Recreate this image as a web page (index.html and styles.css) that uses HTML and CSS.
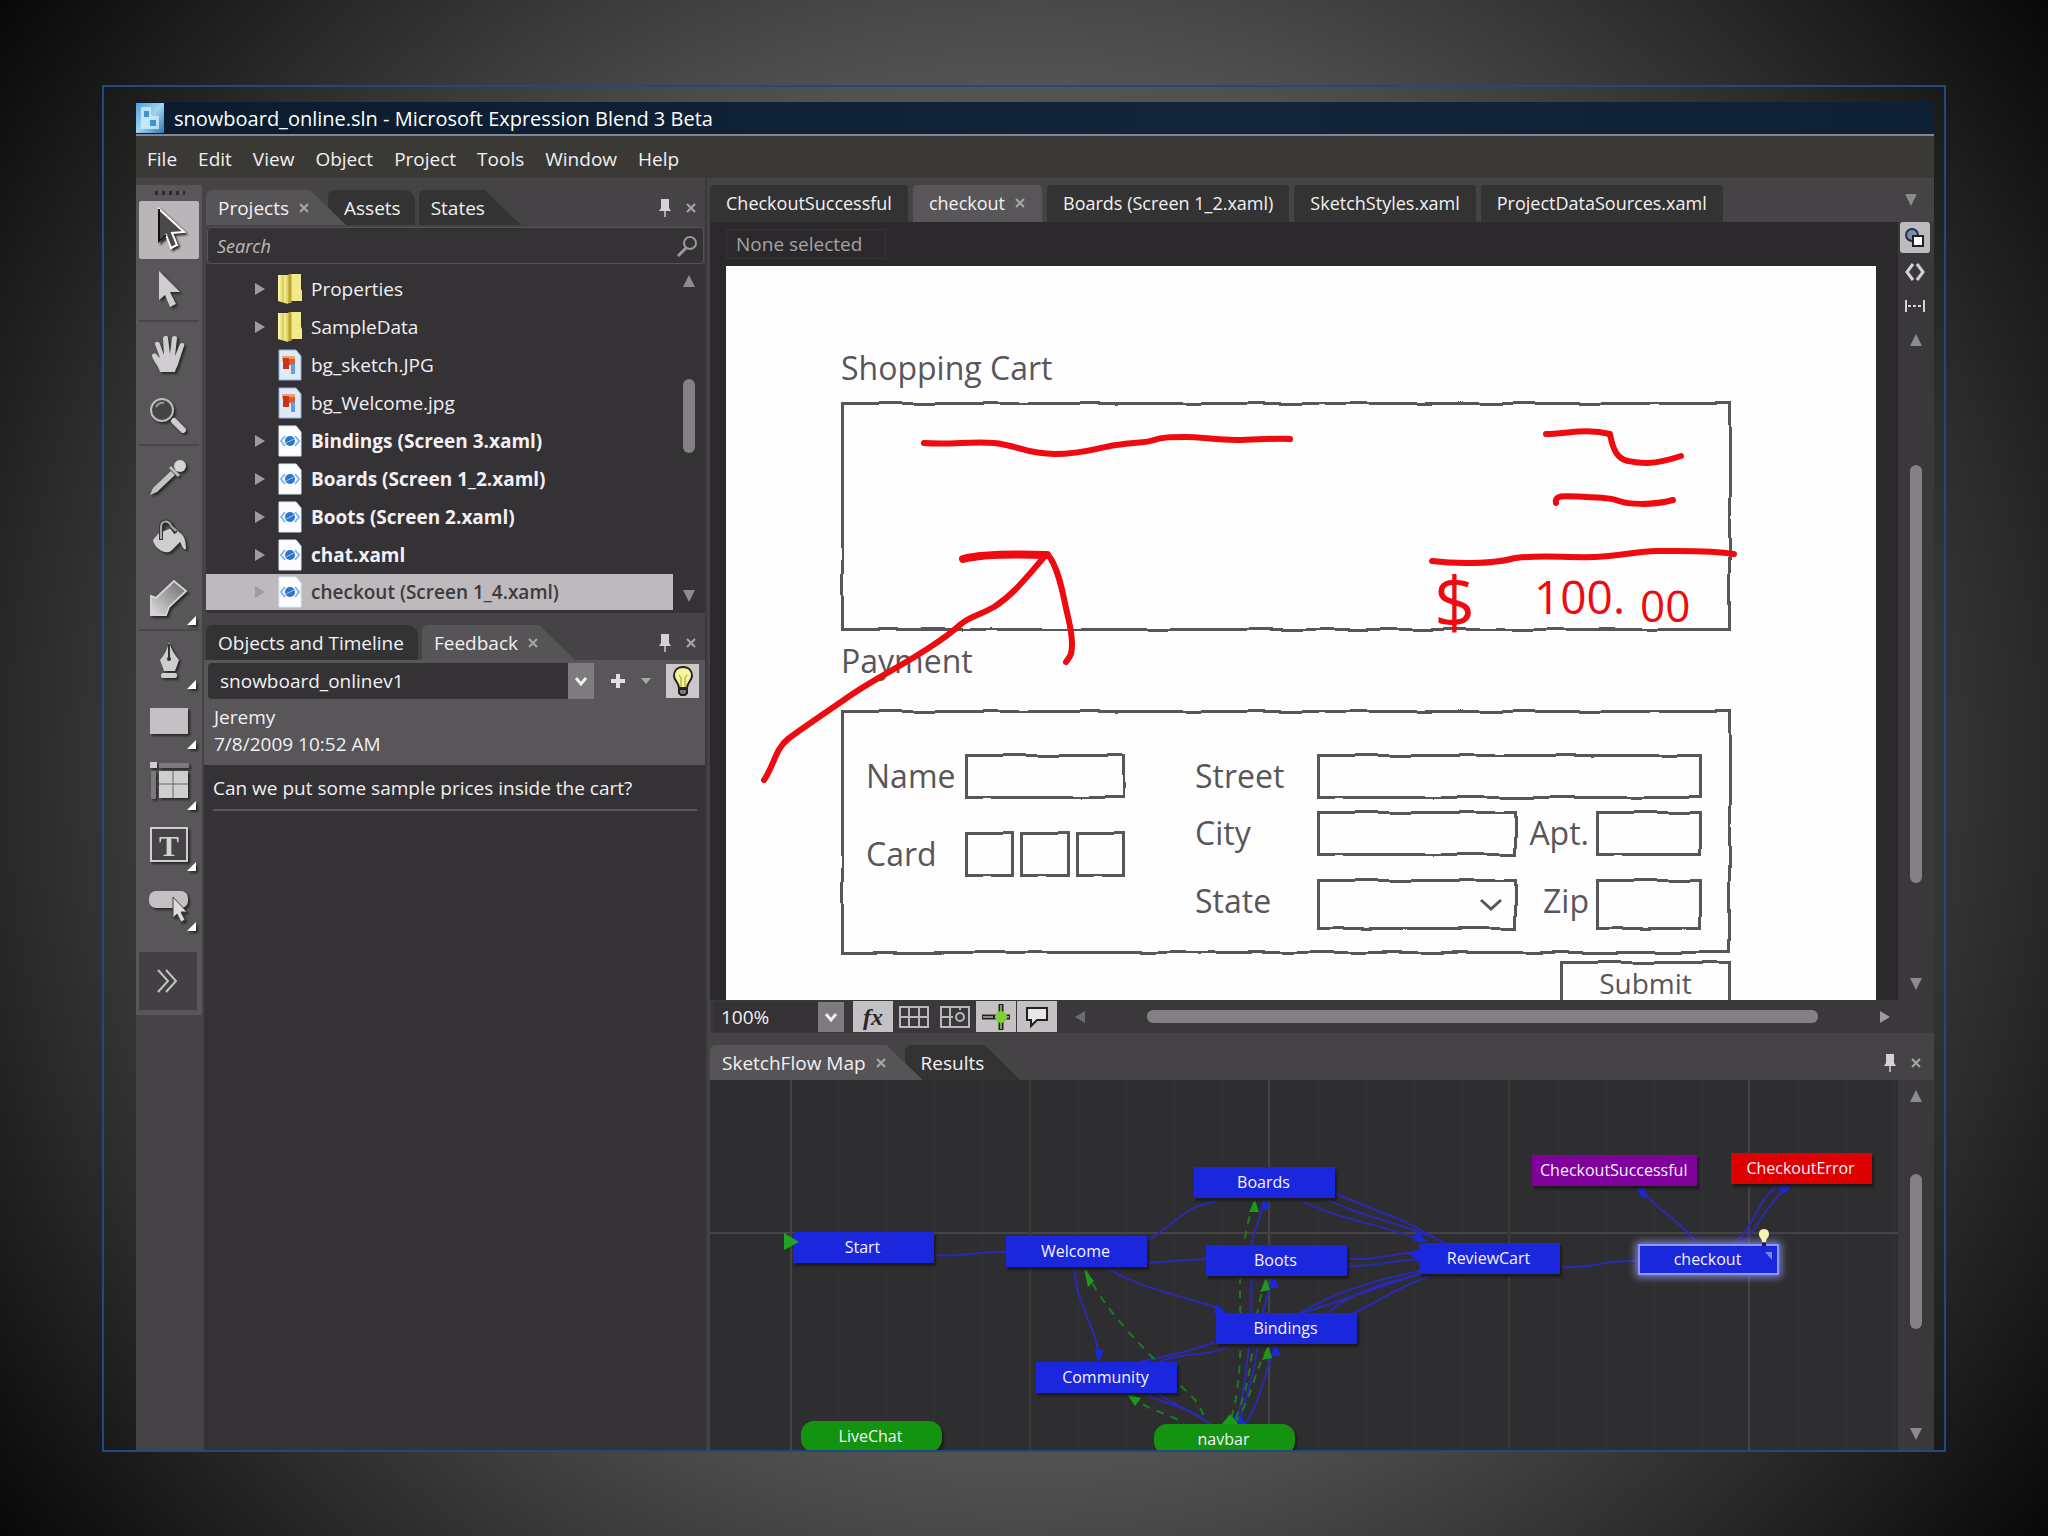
FILE: index.html
```html
<!DOCTYPE html>
<html lang="en">
<head>
<meta charset="utf-8">
<title>snowboard_online.sln - Microsoft Expression Blend 3 Beta</title>
<link rel="stylesheet" href="styles.css">
</head>
<body>
<svg class="defs" width="0" height="0" aria-hidden="true">
  <defs>
    <filter id="rough" x="-5%" y="-20%" width="110%" height="140%">
      <feTurbulence type="fractalNoise" baseFrequency="0.03" numOctaves="1" seed="4" result="n"/>
      <feDisplacementMap in="SourceGraphic" in2="n" scale="5" xChannelSelector="A" yChannelSelector="G"/>
    </filter>
    <linearGradient id="fold" x1="0" x2="1"><stop offset="0" stop-color="#fffcae"/><stop offset=".5" stop-color="#d9cb5a"/><stop offset=".55" stop-color="#f7f09a"/><stop offset="1" stop-color="#c9b83c"/></linearGradient>
    <linearGradient id="fade" x1="0" y1="1" x2="1" y2="0"><stop offset="0" stop-color="#dddbdd"/><stop offset="1" stop-color="#6a686a"/></linearGradient>
    <linearGradient id="app" x1="0" y1="0" x2="1" y2="1"><stop offset="0" stop-color="#4f9fd8"/><stop offset=".5" stop-color="#9fd4f0"/><stop offset="1" stop-color="#2c78b4"/></linearGradient>
  </defs>
  <symbol id="x" viewBox="0 0 12 12"><path d="M2 2l8 8M10 2l-8 8" stroke="currentColor" stroke-width="2" fill="none"/></symbol>
  <symbol id="pin" viewBox="0 0 16 20"><path d="M4 1h8v9l2 3H2l2-3z" fill="#d4d2d4"/><path d="M8 13v6" stroke="#aaa8aa" stroke-width="2"/></symbol>
  <symbol id="up" viewBox="0 0 12 14"><path d="M6 1l6 12H0z" fill="#8d8b8d"/></symbol>
  <symbol id="down" viewBox="0 0 12 14"><path d="M6 13L0 1h12z" fill="#8d8b8d"/></symbol>
  <symbol id="right" viewBox="0 0 12 12"><path d="M11 6L1 0v12z" fill="#9d9b9d"/></symbol>
  <symbol id="left" viewBox="0 0 12 12"><path d="M1 6l10-6v12z" fill="#6d6b6d"/></symbol>
  <symbol id="chev" viewBox="0 0 14 14"><path d="M2 4l5 6 5-6" fill="none" stroke="#f0eef0" stroke-width="3"/></symbol>
  <symbol id="folder" viewBox="0 0 26 32"><path d="M1 2h12v26l-2 3-10-3z" fill="url(#fold)"/><path d="M13 1h11v15l1 2v10H13z" fill="#f1e98c"/><path d="M13 1v29" stroke="#b9a632" stroke-width="3"/></symbol>
  <symbol id="jpg" viewBox="0 0 24 32"><path d="M1 1h17l5 6v24H1z" fill="#dfeaf8" stroke="#8fb0dc"/><path d="M4 7h13v5H4z" fill="#f0a070"/><path d="M5 9h6v11H5z" fill="#c8341c"/><path d="M11 10h6v6h-6z" fill="#e05a24"/><path d="M13 15h4v10h-4z" fill="#6a9ad8"/></symbol>
  <symbol id="xaml" viewBox="0 0 24 32"><path d="M1 1h17l5 6v24H1z" fill="#fbfdff" stroke="#dfe8f4"/><path d="M7 11l-4 5 4 5M17 11l4 5-4 5" fill="none" stroke="#8ab6e8" stroke-width="2"/><circle cx="12" cy="16" r="5" fill="#2f74c8"/><path d="M8 18l8-4" stroke="#9cc8f4" stroke-width="1"/></symbol>
  <symbol id="bulb" viewBox="0 0 26 32"><path d="M13 2c-6 0-9 4-9 9 0 4 5 7 5 12h8c0-5 5-8 5-12 0-5-3-9-9-9z" fill="#f8f49a" stroke="#222" stroke-width="2"/><path d="M11 22V13l-2-3M15 22V13l2-3" fill="none" stroke="#a09430"/><path d="M9 24h8v4l-2 2h-4l-2-2z" fill="#777" stroke="#222" stroke-width="2"/></symbol>
</svg>

<div class="frame">
<div class="app">
  <header class="titlebar">
    <svg width="28" height="30" viewBox="0 0 28 30" aria-hidden="true"><rect width="28" height="30" fill="url(#app)"/><path d="M5 4h10v9h8v13H5z" fill="#d4effc" opacity=".75"/><path d="M8 8h5v6H8zM14 17h6v6h-6z" fill="#3f94cf"/></svg>
    <h1>snowboard_online.sln - Microsoft Expression Blend 3 Beta</h1>
  </header>
  <nav class="menu">
    <button>File</button><button>Edit</button><button>View</button><button>Object</button><button>Project</button><button>Tools</button><button>Window</button><button>Help</button>
  </nav>

  <div class="work">
    <aside class="tools">
      <div class="toolbox">
        <div class="grip"></div>
        <button class="tool on" aria-label="Selection"><svg viewBox="0 0 66 60"><path d="M23 9v32l7-6 5 13 6-3-5-12 12-1z" fill="#4a484a" stroke="#fff" stroke-width="2"/><path d="M23 9v32l7-6" fill="none" stroke="#111" stroke-width="2"/></svg></button>
        <button class="tool" aria-label="Direct selection"><svg viewBox="0 0 66 60"><path d="M23 11v29l6-5 5 12 6-3-6-12h10z" fill="#cfcdcf"/></svg></button>
        <hr>
        <button class="tool" aria-label="Pan"><svg viewBox="0 0 66 60"><path d="M24 49c-1-6-8-12-8-17 1-2 4-2 5 0l3 3-5-14c0-3 4-3 5 0l4 11-1-17c1-3 5-3 5 0l2 16 2-16c1-3 5-2 5 0l-2 18 5-12c2-2 5-1 4 2l-5 15c-1 5-3 7-4 11z" fill="#cfcdcf"/></svg></button>
        <button class="tool" aria-label="Zoom"><svg viewBox="0 0 66 60"><circle cx="26" cy="26" r="11" fill="#454345" stroke="#bdbbbd" stroke-width="2"/><path d="M20 23q3-5 8-4" fill="none" stroke="#999" stroke-width="2"/><path d="M38 37l9 9" stroke="#cfcdcf" stroke-width="6" stroke-linecap="round"/></svg></button>
        <hr>
        <button class="tool" aria-label="Eyedropper"><svg viewBox="0 0 66 60"><path d="M14 48l3-7 18-17 4 4-18 17z" fill="#c4c2c4"/><path d="M34 20l9 9" stroke="#bbb" stroke-width="3"/><circle cx="44" cy="19" r="6" fill="#d6d4d6"/></svg></button>
        <button class="tool" aria-label="Paint bucket"><svg viewBox="0 0 66 60"><path d="M17 32l6-7 15-6 6 6c5 3 6 10 6 16-3 1-4-4-6-7l-9 9c-6 4-17-3-18-11z" fill="#cfcdcf"/><path d="M25 32V19c0-7 8-7 10-1l5 7" fill="none" stroke="#333" stroke-width="4"/><path d="M25 31V19c0-7 8-7 10-1l5 5" fill="none" stroke="#aaa8aa" stroke-width="2"/></svg></button>
        <button class="tool" aria-label="Gradient"><svg viewBox="0 0 66 60"><path d="M15 27v19h15l3-8 17-16-12-10-18 17z" fill="url(#fade)" stroke="#d4d2d4" stroke-width="2"/><path d="M60 47v9h-9z" fill="#fff"/></svg></button>
        <hr>
        <button class="tool" aria-label="Pen"><svg viewBox="0 0 66 60"><path d="M33 10q-2 10-9 18l4 11h11l4-11q-7-8-10-18z" fill="#cfcdcf"/><path d="M33 12v14" stroke="#333" stroke-width="2"/><circle cx="33" cy="27" r="2" fill="#333"/><rect x="25" y="41" width="16" height="5" rx="2" fill="#cfcdcf"/><path d="M60 48v9h-9z" fill="#fff"/></svg></button>
        <button class="tool" aria-label="Rectangle"><svg viewBox="0 0 66 60"><path d="M14 15h38v26H14z" fill="#c4c0c4"/><path d="M60 47v9h-9z" fill="#fff"/></svg></button>
        <button class="tool" aria-label="Grid"><svg viewBox="0 0 66 60"><path d="M23 9h30v5H23zM15 17h5v28h-5z" fill="#7b797b"/><path d="M14 8h7v6h-7zM23 17h29v27H23z" fill="#cfcdcf"/><path d="M37 17v27M23 30h29" stroke="#666" stroke-width="1"/><path d="M60 47v9h-9z" fill="#fff"/></svg></button>
        <button class="tool" aria-label="Text"><svg viewBox="0 0 66 60"><path d="M15 13h36v33H15z" fill="#454345" stroke="#cfcdcf" stroke-width="2"/><text x="33" y="41" class="tee">T</text><path d="M60 47v9h-9z" fill="#fff"/></svg></button>
        <button class="tool" aria-label="Button"><svg viewBox="0 0 66 60"><rect x="13" y="15" width="39" height="17" rx="7" fill="#c4c0c4"/><path d="M37 21v21l4-4 4 8 4-2-4-8h6z" fill="#dddbdd" stroke="#444" stroke-width="1"/><path d="M60 46v9h-9z" fill="#fff"/></svg></button>
        <button class="more" aria-label="More tools"><svg width="30" height="34" viewBox="0 0 30 34"><path d="M5 6l10 11L5 28M13 6l10 11-10 11" fill="none" stroke="#c4c2c4" stroke-width="2"/></svg></button>
      </div>
    </aside>

    <div class="side">
      <section class="projects">
        <div class="tabs">
          <div class="tab active"><button>Projects</button><button class="close" aria-label="Close Projects"><svg><use href="#x"/></svg></button></div>
          <div class="tab"><button>Assets</button></div>
          <div class="tab slant"><button>States</button></div>
          <div class="dock"><button aria-label="Pin"><svg class="pin"><use href="#pin"/></svg></button><button aria-label="Close"><svg><use href="#x"/></svg></button></div>
        </div>
        <div class="search"><input type="text" placeholder="Search" aria-label="Search"><svg viewBox="0 0 24 24" aria-hidden="true"><circle cx="15" cy="9" r="6" fill="none" stroke="#9a989a" stroke-width="2"/><path d="M11 14l-8 8" stroke="#9a989a" stroke-width="3"/></svg></div>
        <div class="treewrap">
          <ul class="tree">
            <li><svg class="tri"><use href="#right"/></svg><svg class="ico"><use href="#folder"/></svg>Properties</li>
            <li><svg class="tri"><use href="#right"/></svg><svg class="ico"><use href="#folder"/></svg>SampleData</li>
            <li><svg class="tri"></svg><svg class="ico"><use href="#jpg"/></svg>bg_sketch.JPG</li>
            <li><svg class="tri"></svg><svg class="ico"><use href="#jpg"/></svg>bg_Welcome.jpg</li>
            <li class="b"><svg class="tri"><use href="#right"/></svg><svg class="ico"><use href="#xaml"/></svg>Bindings (Screen 3.xaml)</li>
            <li class="b"><svg class="tri"><use href="#right"/></svg><svg class="ico"><use href="#xaml"/></svg>Boards (Screen 1_2.xaml)</li>
            <li class="b"><svg class="tri"><use href="#right"/></svg><svg class="ico"><use href="#xaml"/></svg>Boots (Screen 2.xaml)</li>
            <li class="b"><svg class="tri"><use href="#right"/></svg><svg class="ico"><use href="#xaml"/></svg>chat.xaml</li>
            <li class="sel"><svg class="tri"><use href="#right"/></svg><svg class="ico"><use href="#xaml"/></svg>checkout (Screen 1_4.xaml)</li>
          </ul>
          <div class="vbar"><svg><use href="#up"/></svg><i class="lead tree-lead"></i><i class="thumb tree-thumb"></i><i class="rest"></i><svg><use href="#down"/></svg></div>
        </div>
      </section>

      <section class="feedback">
        <div class="tabs">
          <div class="tab"><button>Objects and Timeline</button></div>
          <div class="tab active"><button>Feedback</button><button class="close" aria-label="Close Feedback"><svg><use href="#x"/></svg></button></div>
          <div class="dock"><button aria-label="Pin"><svg class="pin"><use href="#pin"/></svg></button><button aria-label="Close"><svg><use href="#x"/></svg></button></div>
        </div>
        <div class="note-head">
          <div class="picker">
            <button class="combo"><span>snowboard_onlinev1</span><i><svg><use href="#chev"/></svg></i></button>
            <button class="add" aria-label="Add"><svg width="16" height="16" viewBox="0 0 16 16"><path d="M8 1v14M1 8h14" stroke="#e0dee0" stroke-width="4"/></svg></button>
            <button class="add" aria-label="Add options"><svg width="10" height="8" viewBox="0 0 10 8"><path d="M0 1h10L5 7z" fill="#a9a7a9"/></svg></button>
            <button class="bulb" aria-label="Show feedback"><svg><use href="#bulb"/></svg></button>
          </div>
          <p>Jeremy<br>7/8/2009 10:52 AM</p>
        </div>
        <p class="note">Can we put some sample prices inside the cart?</p>
      </section>
    </div>

    <main class="main">
      <div class="doctabs">
        <button>CheckoutSuccessful</button>
        <div class="cur"><button>checkout</button><button class="close" aria-label="Close checkout"><svg><use href="#x"/></svg></button></div>
        <button>Boards (Screen 1_2.xaml)</button>
        <button>SketchStyles.xaml</button>
        <button>ProjectDataSources.xaml</button>
        <svg class="tabmenu"><use href="#down"/></svg>
      </div>
      <div class="doc">
        <div class="view">
          <div class="crumb"><span>None selected</span></div>
          <div class="board">
            <h2>Shopping Cart</h2>
            <div class="box cart"></div>
            <h2 class="pay">Payment</h2>
            <form class="payment">
              <div class="box outline"></div>
              <div class="left">
                <label for="name">Name</label><input class="box" id="name" type="text">
                <label for="card1">Card</label>
                <div class="card"><input class="box" id="card1" type="text"><input class="box" type="text" aria-label="Card part 2"><input class="box" type="text" aria-label="Card part 3"></div>
              </div>
              <div class="addr">
                <label for="street">Street</label><input class="box wide" id="street" type="text">
                <label for="city">City</label><input class="box" id="city" type="text">
                <label class="r" for="apt">Apt.</label><input class="box" id="apt" type="text">
                <label for="state">State</label>
                <div class="pick"><select class="box" id="state"><option></option></select><svg width="24" height="16" viewBox="0 0 24 16"><path d="M2 3l10 9L22 3" fill="none" stroke="#58565a" stroke-width="3"/></svg></div>
                <label class="r" for="zip">Zip</label><input class="box" id="zip" type="text">
              </div>
            </form>
            <button class="submit"><i class="box"></i><span>Submit</span></button>
            <svg class="ink" width="1150" height="733" viewBox="0 0 1150 733">
              <g fill="none" stroke="#ee0a0e" stroke-width="6" stroke-linecap="round" stroke-linejoin="round">
                <path d="M198 177C225 179 245 175 268 177S300 188 329 188S370 182 390 179S420 177 428 174S445 171 460 171S490 174 510 174S545 172 564 173"/>
                <path d="M237 293C255 288 290 288 321 289" stroke-width="8"/>
                <path d="M319 290C300 312 288 328 268 341C252 350 245 350 235 358C222 370 212 376 198 385C175 400 145 415 125 429S75 463 62 473S48 500 38 514"/>
                <path d="M322 289C332 300 337 328 340 342S346 365 346 378S343 391 340 396"/>
                <path d="M820 168C840 168 860 162 884 168C887 185 892 193 902 195S925 200 955 190"/>
                <path d="M830 237C828 228 840 230 860 231S885 232 893 235S925 240 947 234"/>
                <path d="M706 295C730 298 765 298 785 293S840 292 869 291S910 285 931 285S985 284 1008 288"/>
              </g>
              <g class="price"><text x="708" y="362" font-size="72">$</text><text x="808" y="348" font-size="46">100.</text><text x="914" y="356" font-size="44">00</text></g>
            </svg>
          </div>
        </div>
        <div class="rail">
          <button class="mode on" aria-label="Design"><svg width="24" height="24" viewBox="0 0 24 24"><circle cx="9" cy="9" r="6" fill="#7c8aa6" stroke="#223052" stroke-width="2"/><path d="M10 10h10v10H10z" fill="#fff" stroke="#222" stroke-width="2"/></svg></button>
          <button class="mode" aria-label="XAML"><svg width="24" height="24" viewBox="0 0 24 24"><path d="M10 4l-6 8 6 8M14 4l6 8-6 8" fill="none" stroke="#d4d2d4" stroke-width="3"/></svg></button>
          <button class="mode" aria-label="Split"><svg width="24" height="24" viewBox="0 0 24 24"><path d="M3 6v12M21 6v12" stroke="#d4d2d4" stroke-width="2"/><path d="M5 12h14" stroke="#d4d2d4" stroke-width="2" stroke-dasharray="3 2"/></svg></button>
          <div class="vbar"><svg><use href="#up"/></svg><i class="lead doc-lead"></i><i class="thumb doc-thumb"></i><i class="rest"></i><svg><use href="#down"/></svg></div>
        </div>
      </div>
      <div class="status">
        <button class="combo zoom"><span>100%</span><i><svg><use href="#chev"/></svg></i></button>
        <button class="opt on" aria-label="Effects"><em>fx</em></button>
        <button class="opt" aria-label="Show grid"><svg width="30" height="22" viewBox="0 0 30 22"><path d="M1 1h28v20H1zM10 1v20M20 1v20M1 11h28" fill="none" stroke="#b9b7b9" stroke-width="2"/></svg></button>
        <button class="opt" aria-label="Snap to grid"><svg width="30" height="22" viewBox="0 0 30 22"><path d="M1 1h28v20H1zM10 1v20M1 11h12M20 1v3" fill="none" stroke="#b9b7b9" stroke-width="2"/><circle cx="20" cy="11" r="4" fill="none" stroke="#b9b7b9" stroke-width="2"/></svg></button>
        <button class="opt on" aria-label="Snap to snaplines"><svg width="30" height="28" viewBox="0 0 30 28"><path d="M1 14h28M20 1v26" stroke="#222" stroke-width="5"/><path d="M2 14h10" stroke="#8d8b8d" stroke-width="2"/><path d="M20 2v24M14 14h14" stroke="#6cae2e" stroke-width="2"/><circle cx="20" cy="14" r="6" fill="#7fce3c"/></svg></button>
        <button class="opt on" aria-label="Annotations"><svg width="26" height="24" viewBox="0 0 26 24"><path d="M3 3h20v12H13l-6 6v-6H3z" fill="#e8e6e8" stroke="#222" stroke-width="2"/></svg></button>
        <div class="hbar"><svg><use href="#left"/></svg><i class="thumb h-thumb"></i><svg><use href="#right"/></svg></div>
      </div>
      <section class="flow">
        <div class="tabs">
          <div class="tab active"><button>SketchFlow Map</button><button class="close" aria-label="Close map"><svg><use href="#x"/></svg></button></div>
          <div class="tab slant"><button>Results</button></div>
          <div class="dock"><button aria-label="Pin"><svg class="pin"><use href="#pin"/></svg></button><button aria-label="Close"><svg><use href="#x"/></svg></button></div>
        </div>
        <div class="maprow">
          <div class="map">
            <svg class="edges" width="1190" height="372" viewBox="0 0 1190 372">
              <g stroke="#454345" stroke-width="2"><path d="M81 0v372M559 0v372M1039 0v372M0 153h1190"/><path d="M320 0v372M799 0v372" stroke="#393a38"/></g>
              <g class="blue">
                <path d="M224 175C250 178 262 171 296 172"/><path d="M438 160C465 145 475 125 505 122"/><path d="M438 183C460 181 475 180 496 179"/>
                <path d="M580 115C625 140 665 142 711 160M600 110C650 140 690 140 735 163M625 113C660 130 690 136 725 158"/>
                <path d="M635 178C660 182 690 172 709 172M635 186C660 188 690 178 712 180"/>
                <path d="M590 233C620 215 660 200 715 190M615 235C650 205 690 200 725 190M640 235C680 215 700 200 740 190M570 240C620 225 660 210 700 197"/>
                <path d="M365 187C363 220 389 250 389 281"/><path d="M395 187C440 215 500 220 516 233"/>
                <path d="M505 262C480 272 460 275 430 282M525 262C500 280 470 270 445 284"/>
                <path d="M432 312C450 325 480 325 499 344M445 312C465 325 480 330 503 346"/>
                <path d="M554 118C552 140 542 150 541 170C543 230 540 290 526 344"/><path d="M563 196C556 220 550 240 548 260C546 290 535 320 529 344"/><path d="M566 264C558 280 552 320 535 344"/>
                <path d="M850 187C880 189 895 180 926 181"/><path d="M931 108C940 125 970 140 988 164"/><path d="M1070 104C1045 120 1045 150 1022 164M1082 104C1055 122 1050 150 1030 164"/>
              </g>
              <g fill="#1b27dc"><path d="M555 118l5 12h-10zM564 196l5 12h-10zM566 264l5 12h-10zM926 108h10l-2 12zM384 270h10l-5 12zM506 224l12 10h-14zM698 174l12-6v14zM706 150l12 12h-14zM1064 104h20l-10 10zM516 344h20l-8-12z"/></g>
              <g class="green">
                <path d="M376 190C390 225 430 265 460 295S488 320 496 342"/><path d="M422 314C435 332 460 332 474 344"/>
                <path d="M544 122C536 145 530 180 530 210S534 300 520 342"/><path d="M556 200C540 240 548 290 524 342"/><path d="M558 268C544 290 545 310 526 342"/>
              </g>
              <g fill="#1b9a1b"><path d="M545 120l4 12h-10zM556 198l4 12-10 2zM558 266l4 12-10 2zM374 189l10 12-6 6zM417 314l14 4-6 8zM512 344h16l-8-10z"/></g>
            </svg>
            <div class="node" style="left:83px;top:152px">Start</div>
            <div class="node" style="left:296px;top:156px">Welcome</div>
            <div class="node" style="left:484px;top:87px">Boards</div>
            <div class="node" style="left:496px;top:165px">Boots</div>
            <div class="node" style="left:506px;top:233px">Bindings</div>
            <div class="node" style="left:326px;top:282px">Community</div>
            <div class="node" style="left:709px;top:163px">ReviewCart</div>
            <div class="node picked" style="left:928px;top:164px">checkout</div>
            <div class="node purple" style="left:822px;top:75px">CheckoutSuccessful</div>
            <div class="node red" style="left:1021px;top:73px">CheckoutError</div>
            <div class="node pill" style="left:91px;top:341px">LiveChat</div>
            <div class="node pill" style="left:444px;top:344px">navbar</div>
            <svg class="edges" width="1190" height="372" viewBox="0 0 1190 372"><path d="M74 153l15 9-15 8z" fill="#22a422"/><path d="M1054 149c-4 0-5 3-5 5 0 4 3 4 3 8h4c0-4 3-4 3-8 0-2-1-5-5-5z" fill="#f6f2b0"/><path d="M1052 163h4v3h-4z" fill="#222"/><path d="M1055 172h7v8z" fill="#7a84e8"/></svg>
          </div>
          <div class="rail"><div class="vbar"><svg><use href="#up"/></svg><i class="lead map-lead"></i><i class="thumb map-thumb"></i><i class="rest"></i><svg><use href="#down"/></svg></div></div>
        </div>
      </section>
    </main>
  </div>
</div>
</div>
</body>
</html>
```
FILE: styles.css
```css
* { box-sizing: border-box; }

body {
  margin: 0;
  height: 100vh;
  padding: 85px 102px 84px;
  display: flex;
  background: radial-gradient(circle farthest-corner, #6a6a6a 0, #525252 54%, #383838 70%, #080808 100%);
  font: 19px/24px "Open Sans", "Noto Sans", sans-serif;
  color: #f2f0f2;
  white-space: nowrap;
}

button {
  font: inherit;
  color: inherit;
  background: none;
  border: 0;
  padding: 0;
  display: flex;
  align-items: center;
  justify-content: center;
}

h1, h2, p, ul { margin: 0; padding: 0; font: inherit; }
.defs { position: absolute; }

.frame {
  flex: 1;
  min-width: 0;
  display: flex;
  padding: 15px 10px 0 32px;
  border: 2px solid #1f4a80;
}

.app { flex: 1; min-width: 0; display: flex; flex-direction: column; background: #454345; }

.titlebar {
  height: 34px;
  display: flex;
  align-items: center;
  gap: 10px;
  background: linear-gradient(90deg, #0a1c2e, #12253a 60%, #0e2033);
  border-bottom: 2px solid #7d8894;
  color: #fff;
}
.titlebar h1 { font-size: 20px; padding-top: 2px; }

.menu { height: 42px; display: flex; gap: 21px; padding: 4px 11px 0; background: #3a3936; }

.work { flex: 1; min-height: 0; display: flex; }

/* tool strip */
.tools { width: 66px; padding-top: 7px; }
.toolbox { background: #585658; padding: 0 3px 5px; }
.grip { height: 16px; margin: 0 14px; background: radial-gradient(circle, #2c2a2c 2px, transparent 2px) 0 0 / 7px 16px; }
.tool { width: 60px; height: 61px; }
.tool svg { width: 66px; height: 60px; flex: none; filter: drop-shadow(2px 2px 1px #2a282a); }
.tool.on { background: #b9b5b9; height: 58px; border-radius: 2px; }
.toolbox hr { border: 0; height: 2px; margin: 0; background: #474547; }
.tee { font: 700 30px "Liberation Serif", serif; text-anchor: middle; fill: #d4d2d4; }
.more { width: 58px; height: 58px; margin-top: 16px; background: #424042; }

/* dock panels */
.side { width: 505px; display: flex; flex-direction: column; padding-left: 2px; border-right: 2px solid #3a383a; margin-right: 3px; }
.tabs { display: flex; height: 35px; }
.tab {
  display: flex;
  gap: 9px;
  align-items: center;
  padding: 0 14px 0 12px;
  background: #343334;
  border-radius: 6px 10px 0 0;
  margin-right: 4px;
}
.tab.active, .tab.slant { clip-path: polygon(0 0, calc(100% - 36px) 0, 100% 100%, 0 100%); padding-right: 36px; }
.tab.active { background: #565456; position: relative; z-index: 1; }
.tab.active + .tab { margin-left: -22px; padding-left: 16px; }
.close svg, .dock svg { width: 12px; height: 12px; color: #a9a7a9; }
.dock { margin-left: auto; display: flex; gap: 12px; padding-right: 8px; }
.dock .pin { width: 16px; height: 20px; }
.projects { padding: 12px 0 0 2px; }
.search { display: flex; align-items: center; height: 37px; margin: 2px 1px 0; padding-right: 4px; background: #343234; border: 1px solid #555355; border-radius: 4px; }
.search input { flex: 1; font: italic 18px/24px "Open Sans", sans-serif; color: #ddd; background: none; border: 0; padding: 0 9px; }
.search input::placeholder { color: #bdbbbd; opacity: 1; }
.search svg { width: 24px; height: 24px; }
.treewrap { display: flex; height: 349px; background: #343234; }
.tree { flex: 1; list-style: none; padding-top: 6px; }
.tree li { display: flex; align-items: center; height: 38px; padding-left: 48px; }
.tree .tri { width: 12px; height: 12px; }
.tree .ico { width: 28px; height: 32px; margin: 0 7px 0 10px; }
.tree .b { font-weight: 700; }
.tree .sel { height: 36px; background: #bdb9bd; color: #3c3a3c; font-weight: 600; }
.vbar { width: 36px; display: flex; flex-direction: column; align-items: center; padding: 10px 0; }
.vbar svg { width: 12px; height: 14px; flex: none; }
.treewrap .vbar { width: 32px; }
.thumb { background: #838183; border-radius: 6px; width: 12px; }
.rest { flex: 1; }
.lead { flex: none; }
.tree-lead { height: 91px; }
.tree-thumb { height: 74px; }

.feedback { flex: 1; display: flex; flex-direction: column; background: #343234; }
.feedback .tabs { height: 47px; padding: 12px 0 0 2px; background: #454345; }
.note-head { background: #585658; height: 105px; padding: 3px 6px 0 4px; }
.picker { display: flex; align-items: center; height: 36px; }
.combo { display: flex; justify-content: space-between; background: #343234; border-radius: 4px; padding: 0 0 0 12px; }
.combo i { width: 26px; height: 100%; display: flex; align-items: center; justify-content: center; background: #7d7b7d; }
.combo i svg { width: 14px; height: 14px; }
.picker .combo { width: 386px; height: 36px; }
.add { width: 28px; }
.add:nth-child(2) { margin-left: 10px; }
.bulb { width: 33px; height: 34px; margin-left: auto; background: #cbc7cb; }
.bulb svg { width: 26px; height: 32px; }
.note-head p { padding: 5px 0 0 6px; line-height: 27px; }
.note { margin: 0 8px 0 9px; height: 46px; line-height: 46px; border-bottom: 2px solid #585658; }

/* document area */
.main { flex: 1; min-width: 0; display: flex; flex-direction: column; padding-top: 7px; }
.doctabs { display: flex; gap: 5px; height: 37px; font-size: 18px; }
.doctabs > * { background: #343334; padding: 0 16px 2px; border-radius: 4px 4px 0 0; }
.doctabs .cur { display: flex; gap: 9px; background: #585658; }
.doctabs .tabmenu { width: 12px; height: 14px; padding: 0; margin: 8px 17px 0 auto; background: none; }
.doc { flex: 1; min-height: 0; display: flex; }
.view { flex: 1; min-width: 0; display: flex; flex-direction: column; padding: 0 22px 0 16px; background: #2b292b; }
.crumb { height: 44px; padding: 7px 0; }
.crumb span { display: inline-block; height: 30px; line-height: 28px; padding: 0 23px 0 9px; color: #a5a3a5; border: 1px solid #353335; }
.board {
  position: relative;
  flex: 1;
  min-height: 0;
  overflow: hidden;
  background: #fefefe;
  padding: 80px 145px 0 115px;
  color: #58565a;
  font: 32px/44px "Open Sans", "Noto Sans", sans-serif;
}
.board h2 { height: 56px; }
.box { display: block; width: 100%; min-width: 0; border: 3px solid #58565a; background: none; filter: url(#rough); border-radius: 0; padding: 0; }
.cart { height: 229px; }
.board .pay { height: 79px; padding-top: 8px; }
.payment { position: relative; display: flex; gap: 70px; height: 244px; padding: 44px 29px 0 25px; }
.outline { position: absolute; inset: 0; pointer-events: none; }
.left { display: grid; grid-template-columns: 99px 160px; grid-auto-rows: 45px; gap: 33px 0; align-content: start; }
.card { display: grid; grid-template-columns: 1fr 1fr 1fr; gap: 6px; }
.addr { flex: 1; display: grid; grid-template-columns: 122px 1fr 79px 106px; grid-template-rows: 45px 56px 51px; row-gap: 12px; align-content: start; }
.addr .wide { grid-column: span 3; }
.addr input { height: 45px; }
.addr #zip, .pick select { height: 51px; }
.addr .r { padding-right: 7px; text-align: right; }
.pick { position: relative; }
.pick select { appearance: none; }
.pick svg { position: absolute; right: 14px; top: 18px; }
.submit { position: relative; width: 171px; height: 60px; margin: 7px 0 0 auto; padding-bottom: 16px; font-size: 28px; line-height: 32px; }
.submit .box { position: absolute; inset: 0; }
.ink { position: absolute; left: 0; top: 0; }
.price { fill: #ee0a0e; }

.rail { width: 36px; display: flex; flex-direction: column; background: #3a383b; }
.mode { width: 30px; height: 31px; margin: 0 0 3px 2px; border-radius: 3px; }
.mode.on { background: #bdbbbd; }
.rail .vbar { flex: 1; padding: 9px 0; }
.doc-lead { height: 118px; }
.doc-thumb { height: 418px; }
.status { height: 33px; display: flex; align-items: center; gap: 1px; padding: 0 36px 0 3px; background: #3a383b; }
.status .zoom { width: 131px; height: 30px; margin-right: 8px; padding-left: 8px; }
.opt { width: 40px; height: 31px; }
.opt.on { background: #c4c0c4; }
.opt em { font: italic 700 24px/24px "Liberation Serif", serif; color: #2a282a; }
.hbar { flex: 1; display: flex; align-items: center; justify-content: space-between; padding: 0 7px 0 16px; }
.hbar svg { width: 12px; height: 12px; }
.h-thumb { width: 671px; height: 13px; }

/* navigation map */
.flow .tabs { height: 47px; padding-top: 12px; }
.flow .dock { padding-right: 12px; }
.maprow { display: flex; height: 370px; }
.map {
  position: relative;
  flex: 1;
  min-width: 0;
  overflow: hidden;
  background: repeating-linear-gradient(90deg, transparent 0 46px, #313032 46px 48px) 33px 0, #2e2d2f;
}
.edges { position: absolute; left: 0; top: 0; }
.blue { fill: none; stroke: #2a29b4; stroke-width: 2; }
.green { fill: none; stroke: #1e7a22; stroke-width: 2; stroke-dasharray: 8 7; }
.node { position: absolute; min-width: 141px; height: 31px; padding: 0 10px 0 8px; font-size: 16px; line-height: 30px; text-align: center; background: #1b27dc; color: #f4f2ff; box-shadow: 2px 3px 2px #1c1b1c; }
.purple { background: #80009c; }
.red { background: #dc0000; }
.pill { background: #13930f; border-radius: 13px; }
.picked { border: 2px solid #8f96f8; line-height: 26px; box-shadow: 0 0 8px 2px #8288d8; }
.map-lead { height: 71px; }
.map-thumb { height: 155px; }
```
